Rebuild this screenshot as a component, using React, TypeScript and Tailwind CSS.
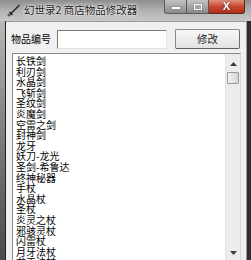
import React from "react";

const items = [
  "长铁剑",
  "利刃剑",
  "水晶剑",
  "飞斩剑",
  "圣纹剑",
  "炎魔剑",
  "空雷之剑",
  "封神剑",
  "龙牙",
  "妖刀-龙光",
  "圣剑-希鲁达",
  "终神秘器",
  "手杖",
  "水晶杖",
  "圣杖",
  "炎灵之杖",
  "邪骇灵杖",
  "闪雷杖",
  "月牙法杖",
  "龙王法杖",
];

function AppIcon() {
  return (
    <svg width="14" height="14" viewBox="0 0 14 14" className="shrink-0">
      <line x1="2" y1="12.5" x2="12.5" y2="2" stroke="#2a2a2a" strokeWidth="1.6" />
      <line x1="2.5" y1="9" x2="5.5" y2="12" stroke="#2a2a2a" strokeWidth="1.4" />
      <line x1="1" y1="13" x2="3" y2="11" stroke="#555" strokeWidth="2" />
    </svg>
  );
}

export default function App() {
  return (
    <div className="w-[251px] h-[260px] overflow-hidden flex flex-col bg-[#3c3c3c] font-['Noto_Sans_CJK_SC','Noto_Sans',sans-serif] text-black">
      {/* title bar */}
      <div className="h-[21px] shrink-0 flex items-start bg-gradient-to-b from-[#8e8e8e] via-[#b2b2b2] to-[#c8c8c8] relative">
        <div className="flex items-center gap-[3px] pl-[7px] pt-[3px]">
          <AppIcon />
          <span className="text-[10.5px] leading-[14px] text-[#1a1a1a] [text-shadow:0_0_4px_#ffffff,0_0_2px_#ffffff]">
            幻世录2 商店物品修改器
          </span>
        </div>
        <div className="ml-auto mr-[6px] flex h-[14px]">
          <div className="w-[23px] h-[14px] rounded-bl-[3px] border border-[#5a5a5a] border-t-0 bg-gradient-to-b from-[#c4c4c4] to-[#8a8a8a] flex items-center justify-center">
            <div className="w-[8px] h-[2px] bg-white mt-[3px] shadow-[0_0_1px_#333]" />
          </div>
          <div className="w-[22px] h-[14px] border-b border-r border-[#5a5a5a] bg-gradient-to-b from-[#c4c4c4] to-[#8a8a8a] flex items-center justify-center">
            <div className="w-[8px] h-[6px] border border-white bg-transparent shadow-[0_0_1px_#333]" />
          </div>
          <div className="w-[36px] h-[14px] rounded-br-[3px] border-b border-r border-[#5a2a20] bg-gradient-to-b from-[#e0917f] via-[#c8462e] to-[#b03018] flex items-center justify-center">
            <span className="text-white text-[11px] leading-[11px] font-bold font-['Liberation_Sans',sans-serif] [text-shadow:0_0_2px_#400]">
              X
            </span>
          </div>
        </div>
      </div>

      {/* body */}
      <div className="flex flex-1 min-h-0">
        <div className="w-[6px] shrink-0 bg-gradient-to-b from-[#b8b8b8] via-[#7a7a7a] to-[#4a4a4a] border-r border-[#222]" />
        <div className="flex-1 min-w-0 bg-[#f0f0f0] border-t border-[#9a9a9a] flex flex-col pl-[5px] pr-[5px] pt-[7px]">
          <div className="flex items-center h-[20px]">
            <span className="text-[10px] leading-[12px] w-[40px]">物品编号</span>
            <div className="ml-[6px] w-[110px] h-[19px] bg-white border border-t-[#7a7a7a] border-l-[#7a7a7a] border-r-[#e3e3e3] border-b-[#e3e3e3]" />
            <button className="ml-[8px] w-[65px] h-[20px] rounded-[2px] border border-[#8a8a8a] border-b-[#5e5e5e] border-r-[#6e6e6e] bg-gradient-to-b from-[#f8f8f8] to-[#e2e2e2] text-[10.5px] leading-[12px] text-[#222]">
              修改
            </button>
          </div>
          <div className="mt-[4px] ml-[1px] mr-0 h-[211px] shrink-0 bg-white border border-[#8a8a8a] border-r-[#d8d8d8] flex">
            <div className="flex-1 pl-[3px] pt-[2px]">
              {items.map((t) => (
                <div key={t} className="text-[10px] leading-[10.6px] h-[10.6px] whitespace-nowrap">
                  {t}
                </div>
              ))}
            </div>
            <div className="w-[15px] shrink-0 bg-[#ececec] border-l border-[#e2e2e2] flex flex-col items-center">
              <div className="h-[18px] w-full flex items-center justify-center pt-[1px]">
                <svg width="7" height="4" viewBox="0 0 7 4">
                  <polygon points="3.5,0 7,4 0,4" fill="#3a3a3a" />
                </svg>
              </div>
              <div className="w-[12px] h-[12px] rounded-[1px] border border-[#9a9a9a] bg-gradient-to-r from-[#f2f2f2] to-[#d6d6d6]" />
              <div className="flex-1" />
              <div className="h-[16px] w-full flex items-start justify-center pt-[4px]">
                <svg width="7" height="4" viewBox="0 0 7 4">
                  <polygon points="0,0 7,0 3.5,4" fill="#3a3a3a" />
                </svg>
              </div>
            </div>
          </div>
        </div>
        <div className="w-[5px] shrink-0 bg-[#2e2e2e] border-l border-[#9a9a9a]" />
      </div>
    </div>
  );
}
